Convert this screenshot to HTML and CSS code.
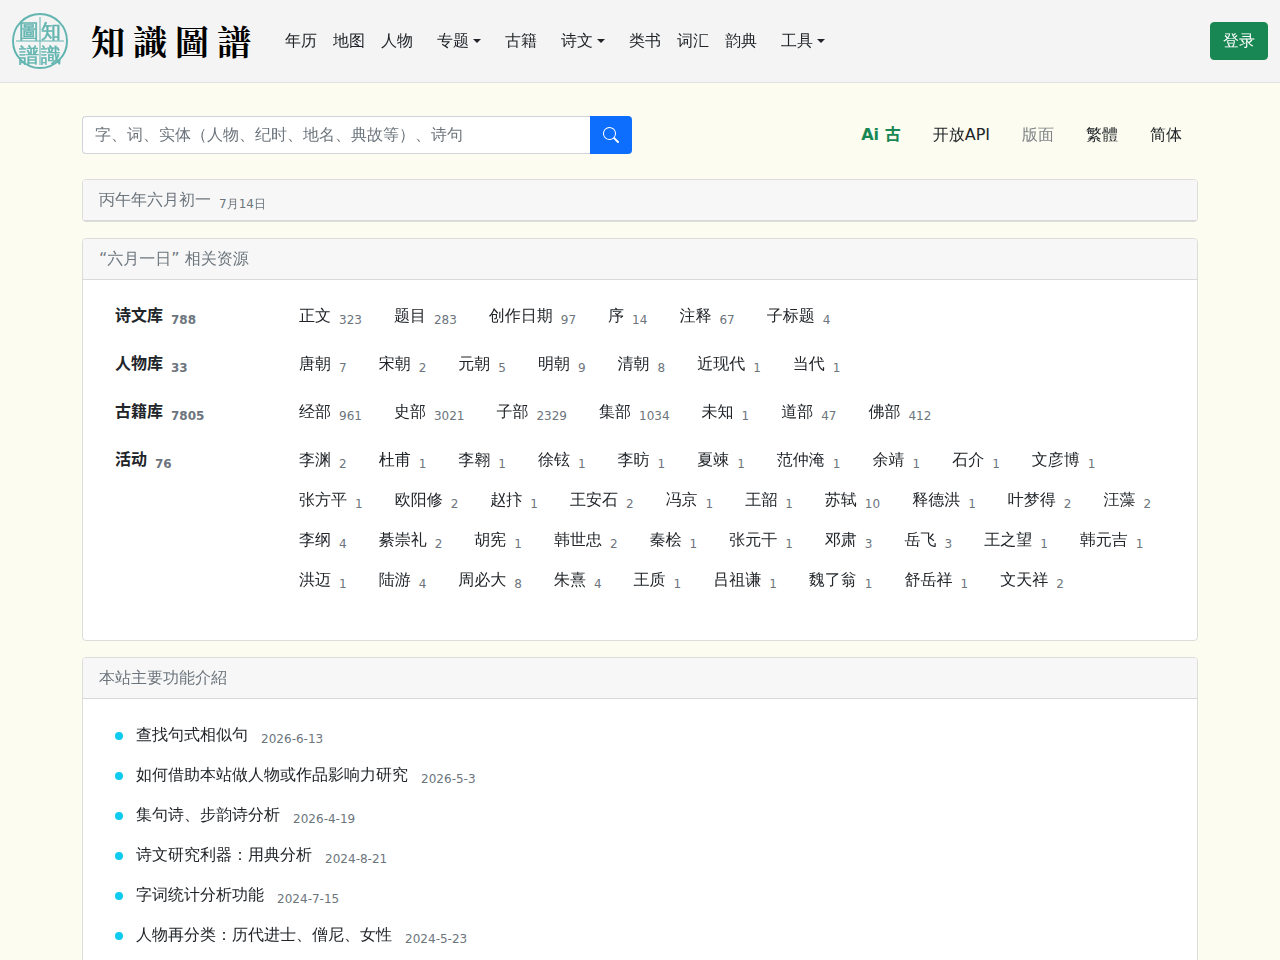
FILE: index.html
```html
<!DOCTYPE html>
<html lang="zh-CN">

<head>
    <meta charset="utf-8">
    <meta name="viewport" content="width=device-width, initial-scale=1">
    <title>知識圖譜</title>
    <link rel="stylesheet" href="styles.css">
</head>

<body>
    <header class="navbar">
        <a class="brand" href="#">
            <svg class="seal" width="56" height="56" viewBox="0 0 56 56" aria-hidden="true">
                <text x="7" y="25">圖</text>
                <text x="29" y="25">知</text>
                <text x="7" y="49">譜</text>
                <text x="29" y="49">識</text>
                <path class="seal-ring" d="M28 4v48M4 28h48" />
                <circle class="seal-ring" cx="28" cy="28" r="27" />
            </svg>
            <span class="brand-name"><span>知</span><span>識</span><span>圖</span><span>譜</span></span>
        </a>
        <nav class="nav">
            <a href="#">年历</a>
            <a href="#">地图</a>
            <a href="#">人物</a>
            <button type="button" class="dropdown">专题</button>
            <a href="#">古籍</a>
            <button type="button" class="dropdown">诗文</button>
            <a href="#">类书</a>
            <a href="#">词汇</a>
            <a href="#">韵典</a>
            <button type="button" class="dropdown">工具</button>
        </nav>
        <button type="button" class="btn-login">登录</button>
    </header>

    <main class="container">
        <div class="top">
            <form class="search">
                <input type="text" aria-label="搜索" placeholder="字、词、实体（人物、纪时、地名、典故等）、诗句">
                <button type="button" aria-label="搜索">
                    <svg width="16" height="16" fill="currentColor" viewBox="0 0 16 16">
                        <path d="M11.742 10.344a6.5 6.5 0 1 0-1.397 1.398h-.001c.03.04.062.078.098.115l3.85 3.85a1 1 0 0 0 1.415-1.414l-3.85-3.85a1.007 1.007 0 0 0-.115-.1zM12 6.5a5.5 5.5 0 1 1-11 0 5.5 5.5 0 0 1 11 0z" />
                    </svg>
                </button>
            </form>
            <nav class="links">
                <a class="ai" href="#">Ai 古</a>
                <a href="#">开放API</a>
                <a class="muted" href="#">版面</a>
                <a href="#">繁體</a>
                <a href="#">简体</a>
            </nav>
        </div>

        <section class="card">
            <div class="card-header">丙午年六月初一<sub>7月14日</sub></div>
        </section>

        <section class="card">
            <div class="card-header">“六月一日” 相关资源</div>
            <div class="card-body resources">
                <div class="row">
                    <div class="label">诗文库<sub>788</sub></div>
                    <div class="items">
                        <a href="#">正文<sub>323</sub></a>
                        <a href="#">题目<sub>283</sub></a>
                        <a href="#">创作日期<sub>97</sub></a>
                        <a href="#">序<sub>14</sub></a>
                        <a href="#">注释<sub>67</sub></a>
                        <a href="#">子标题<sub>4</sub></a>
                    </div>
                </div>
                <div class="row">
                    <div class="label">人物库<sub>33</sub></div>
                    <div class="items">
                        <a href="#">唐朝<sub>7</sub></a>
                        <a href="#">宋朝<sub>2</sub></a>
                        <a href="#">元朝<sub>5</sub></a>
                        <a href="#">明朝<sub>9</sub></a>
                        <a href="#">清朝<sub>8</sub></a>
                        <a href="#">近现代<sub>1</sub></a>
                        <a href="#">当代<sub>1</sub></a>
                    </div>
                </div>
                <div class="row">
                    <div class="label">古籍库<sub>7805</sub></div>
                    <div class="items">
                        <a href="#">经部<sub>961</sub></a>
                        <a href="#">史部<sub>3021</sub></a>
                        <a href="#">子部<sub>2329</sub></a>
                        <a href="#">集部<sub>1034</sub></a>
                        <a href="#">未知<sub>1</sub></a>
                        <a href="#">道部<sub>47</sub></a>
                        <a href="#">佛部<sub>412</sub></a>
                    </div>
                </div>
                <div class="row">
                    <div class="label">活动<sub>76</sub></div>
                    <div class="items">
                        <a href="#">李渊<sub>2</sub></a>
                        <a href="#">杜甫<sub>1</sub></a>
                        <a href="#">李翱<sub>1</sub></a>
                        <a href="#">徐铉<sub>1</sub></a>
                        <a href="#">李昉<sub>1</sub></a>
                        <a href="#">夏竦<sub>1</sub></a>
                        <a href="#">范仲淹<sub>1</sub></a>
                        <a href="#">余靖<sub>1</sub></a>
                        <a href="#">石介<sub>1</sub></a>
                        <a href="#">文彦博<sub>1</sub></a>
                        <a href="#">张方平<sub>1</sub></a>
                        <a href="#">欧阳修<sub>2</sub></a>
                        <a href="#">赵抃<sub>1</sub></a>
                        <a href="#">王安石<sub>2</sub></a>
                        <a href="#">冯京<sub>1</sub></a>
                        <a href="#">王韶<sub>1</sub></a>
                        <a href="#">苏轼<sub>10</sub></a>
                        <a href="#">释德洪<sub>1</sub></a>
                        <a href="#">叶梦得<sub>2</sub></a>
                        <a href="#">汪藻<sub>2</sub></a>
                        <a href="#">李纲<sub>4</sub></a>
                        <a href="#">綦崇礼<sub>2</sub></a>
                        <a href="#">胡宪<sub>1</sub></a>
                        <a href="#">韩世忠<sub>2</sub></a>
                        <a href="#">秦桧<sub>1</sub></a>
                        <a href="#">张元干<sub>1</sub></a>
                        <a href="#">邓肃<sub>3</sub></a>
                        <a href="#">岳飞<sub>3</sub></a>
                        <a href="#">王之望<sub>1</sub></a>
                        <a href="#">韩元吉<sub>1</sub></a>
                        <a href="#">洪迈<sub>1</sub></a>
                        <a href="#">陆游<sub>4</sub></a>
                        <a href="#">周必大<sub>8</sub></a>
                        <a href="#">朱熹<sub>4</sub></a>
                        <a href="#">王质<sub>1</sub></a>
                        <a href="#">吕祖谦<sub>1</sub></a>
                        <a href="#">魏了翁<sub>1</sub></a>
                        <a href="#">舒岳祥<sub>1</sub></a>
                        <a href="#">文天祥<sub>2</sub></a>
                    </div>
                </div>
            </div>
        </section>

        <section class="card">
            <div class="card-header">本站主要功能介紹</div>
            <ul class="card-body articles">
                <li><a href="#">查找句式相似句</a> <sub>2026-6-13</sub></li>
                <li><a href="#">如何借助本站做人物或作品影响力研究</a> <sub>2026-5-3</sub></li>
                <li><a href="#">集句诗、步韵诗分析</a> <sub>2026-4-19</sub></li>
                <li><a href="#">诗文研究利器：用典分析</a> <sub>2024-8-21</sub></li>
                <li><a href="#">字词统计分析功能</a> <sub>2024-7-15</sub></li>
                <li><a href="#">人物再分类：历代进士、僧尼、女性</a> <sub>2024-5-23</sub></li>
            </ul>
        </section>
    </main>
</body>

</html>
```
FILE: styles.css
```css
* {
    box-sizing: border-box;
}

body {
    margin: 0;
    background: #fcfcf0;
    color: #212529;
    font-family: "DejaVu Sans", "WenQuanYi Zen Hei", "Noto Sans CJK JP", sans-serif;
    font-size: 16px;
    line-height: 24px;
    /* keep full-width punctuation at its full width */
    text-spacing-trim: space-all;
}

a {
    color: inherit;
    text-decoration: none;
}

input,
button {
    font: inherit;
    text-spacing-trim: inherit;
}

/* counts and dates sit a little under the text */
sub {
    margin-left: 8px;
    color: #6c757d;
    font-size: 12px;
    line-height: 0;
    vertical-align: -3px;
}

/* navbar */
.navbar {
    display: flex;
    align-items: center;
    min-height: 83px;
    padding: 0 12px;
    background: #f4f4f4;
    border-bottom: 1px solid #dee2e6;
}

.brand {
    display: flex;
    align-items: center;
    gap: 23px;
    margin-right: 26px;
}

.seal {
    display: block;
    fill: #62b5b0;
    stroke: #62b5b0;
    stroke-width: 0.5;
    font-family: "WenQuanYi Zen Hei", "Noto Sans CJK TC", sans-serif;
    font-size: 20px;
}

.seal-ring {
    fill: none;
    stroke-width: 2;
}

path.seal-ring {
    stroke-width: 1;
}

.brand-name {
    display: flex;
    gap: 8px;
    color: #000;
    font-family: "Noto Serif CJK TC", "Noto Sans CJK TC", serif;
    font-size: 34px;
    font-weight: 700;
    line-height: 40px;
}

.nav {
    display: flex;
}

.nav a,
.nav button {
    padding: 8px;
}

.nav button {
    display: flex;
    align-items: center;
    gap: 4px;
    margin: 0 8px;
    border: 0;
    background: none;
    color: inherit;
}

.dropdown::after {
    content: "";
    border-top: 4px solid;
    border-right: 4px solid transparent;
    border-left: 4px solid transparent;
}

.btn-login {
    margin-left: auto;
    padding: 6px 12px;
    border: 1px solid #198754;
    border-radius: 4px;
    background: #198754;
    color: #fff;
}

/* page */
.container {
    max-width: 1140px;
    margin: 0 auto;
    padding: 33px 12px 0;
}

.top {
    display: flex;
    justify-content: space-between;
    margin-bottom: 25px;
}

.search {
    display: flex;
    flex: 0 1 550px;
}

.search input {
    flex: 1;
    min-width: 0;
    padding: 6px 12px;
    border: 1px solid #ced4da;
    border-right: 0;
    border-radius: 4px 0 0 4px;
    background: #fff;
    color: #212529;
}

.search input::placeholder {
    color: #6c757d;
    opacity: 1;
}

.search button {
    padding: 6px 13px;
    border: 0;
    border-radius: 0 4px 4px 0;
    background: #0d6efd;
    color: #fff;
}

.search svg {
    display: block;
}

.links {
    display: flex;
}

.links a {
    padding: 7px 16px;
}

/* Zen Hei has no bold face */
.links .ai,
.label {
    font-family: "DejaVu Sans", "Noto Sans CJK SC", sans-serif;
    font-weight: bold;
}

.links .ai {
    color: #198754;
}

.links .muted {
    color: #808488;
}

/* cards */
.card {
    margin-bottom: 16px;
    border: 1px solid #dcdddb;
    border-radius: 4px;
    background: #fff;
}

.card-header {
    padding: 8px 16px;
    border-bottom: 1px solid #d8d9da;
    border-radius: 3px 3px 0 0;
    background: #f7f7f7;
    color: #6c757d;
}

.card-body {
    padding: 16px 16px 32px 32px;
}

.row {
    display: grid;
    grid-template-columns: 184px 1fr;
    margin-bottom: 8px;
    line-height: 40px;
}

.items {
    display: flex;
    flex-wrap: wrap;
    column-gap: 32px;
}

.articles {
    margin: 0;
    list-style: none;
    line-height: 40px;
}

.articles li::before {
    content: "";
    display: inline-block;
    width: 8px;
    height: 8px;
    margin-right: 13px;
    border-radius: 50%;
    background: #0dcaf0;
}
```
